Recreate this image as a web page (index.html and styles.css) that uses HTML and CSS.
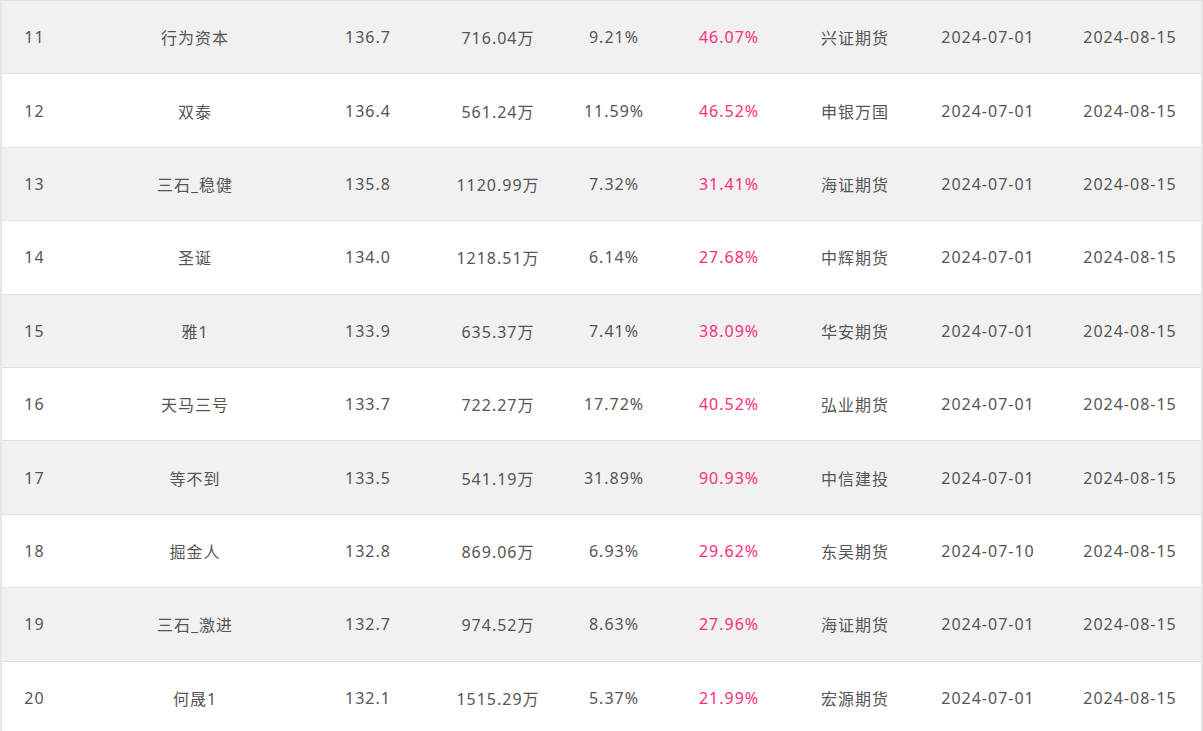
FILE: index.html
```html
<!DOCTYPE html>
<html lang="zh-CN">
<head>
<meta charset="utf-8">
<title>排行榜</title>
<link rel="stylesheet" href="styles.css">
</head>
<body>
<div class="table">
  <div class="row odd"><span class="c1">11</span><span class="c2">行为资本</span><span class="c3">136.7</span><span class="c4">716.04万</span><span class="c5">9.21%</span><span class="c6 hot">46.07%</span><span class="c7">兴证期货</span><span class="c8">2024-07-01</span><span class="c9">2024-08-15</span></div>
  <div class="row"><span class="c1">12</span><span class="c2">双泰</span><span class="c3">136.4</span><span class="c4">561.24万</span><span class="c5">11.59%</span><span class="c6 hot">46.52%</span><span class="c7">申银万国</span><span class="c8">2024-07-01</span><span class="c9">2024-08-15</span></div>
  <div class="row odd"><span class="c1">13</span><span class="c2">三石_稳健</span><span class="c3">135.8</span><span class="c4">1120.99万</span><span class="c5">7.32%</span><span class="c6 hot">31.41%</span><span class="c7">海证期货</span><span class="c8">2024-07-01</span><span class="c9">2024-08-15</span></div>
  <div class="row"><span class="c1">14</span><span class="c2">圣诞</span><span class="c3">134.0</span><span class="c4">1218.51万</span><span class="c5">6.14%</span><span class="c6 hot">27.68%</span><span class="c7">中辉期货</span><span class="c8">2024-07-01</span><span class="c9">2024-08-15</span></div>
  <div class="row odd"><span class="c1">15</span><span class="c2">雅1</span><span class="c3">133.9</span><span class="c4">635.37万</span><span class="c5">7.41%</span><span class="c6 hot">38.09%</span><span class="c7">华安期货</span><span class="c8">2024-07-01</span><span class="c9">2024-08-15</span></div>
  <div class="row"><span class="c1">16</span><span class="c2">天马三号</span><span class="c3">133.7</span><span class="c4">722.27万</span><span class="c5">17.72%</span><span class="c6 hot">40.52%</span><span class="c7">弘业期货</span><span class="c8">2024-07-01</span><span class="c9">2024-08-15</span></div>
  <div class="row odd"><span class="c1">17</span><span class="c2">等不到</span><span class="c3">133.5</span><span class="c4">541.19万</span><span class="c5">31.89%</span><span class="c6 hot">90.93%</span><span class="c7">中信建投</span><span class="c8">2024-07-01</span><span class="c9">2024-08-15</span></div>
  <div class="row"><span class="c1">18</span><span class="c2">掘金人</span><span class="c3">132.8</span><span class="c4">869.06万</span><span class="c5">6.93%</span><span class="c6 hot">29.62%</span><span class="c7">东吴期货</span><span class="c8">2024-07-10</span><span class="c9">2024-08-15</span></div>
  <div class="row odd"><span class="c1">19</span><span class="c2">三石_激进</span><span class="c3">132.7</span><span class="c4">974.52万</span><span class="c5">8.63%</span><span class="c6 hot">27.96%</span><span class="c7">海证期货</span><span class="c8">2024-07-01</span><span class="c9">2024-08-15</span></div>
  <div class="row"><span class="c1">20</span><span class="c2">何晟1</span><span class="c3">132.1</span><span class="c4">1515.29万</span><span class="c5">5.37%</span><span class="c6 hot">21.99%</span><span class="c7">宏源期货</span><span class="c8">2024-07-01</span><span class="c9">2024-08-15</span></div>
</div>
</body>
</html>
```
FILE: styles.css
```css
html, body {
  margin: 0;
  padding: 0;
  background: #ffffff;
  overflow: hidden;
}
.table {
  width: 1203px;
  box-sizing: border-box;
  border-left: 2px solid #e7e7e9;
  border-right: 2px solid #e7e7e9;
  border-top: 1px solid #e0e0e3;
  font-family: "Noto Sans", "Noto Sans CJK SC", sans-serif;
  font-size: 16px;
  letter-spacing: 1px;
  color: #555555;
}
.row {
  display: grid;
  grid-template-columns: 65px 256px 90px 170px 62px 168px 84px 182px 102px 20px;
  align-items: center;
  height: 72.4px;
  border-bottom: 1px solid #e1e1e4;
  background: #ffffff;
}
.row.odd {
  background: #f1f1f1;
}
.row span {
  text-align: center;
  white-space: nowrap;
}
.hot {
  color: #fb2d7c;
}
```
